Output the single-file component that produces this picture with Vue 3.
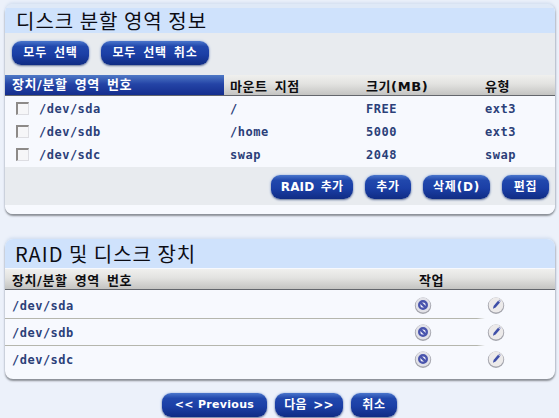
<template>
  <div class="page">
    <section class="card first">
      <h2 class="title">디스크 분할 영역 정보</h2>
      <div class="toolbar">
        <button class="btn w77">모두 선택</button>
        <button class="btn w108">모두 선택 취소</button>
      </div>
      <div class="row head parts">
        <span class="sel-col">장치/분할 영역 번호</span>
        <span>마운트 지점</span>
        <span>크기(MB)</span>
        <span>유형</span>
      </div>
      <div class="rows">
        <div v-for="p in partitions" :key="p.dev" class="row parts part-row">
          <span class="dev"><i class="check"></i>{{ p.dev }}</span>
          <span>{{ p.mount }}</span>
          <span>{{ p.size }}</span>
          <span>{{ p.type }}</span>
        </div>
      </div>
      <div class="actions">
        <button class="btn w82 tight">RAID 추가</button>
        <button class="btn w46">추가</button>
        <button class="btn w67">삭제(D)</button>
        <button class="btn w47">편집</button>
      </div>
    </section>

    <section class="card second">
      <h2 class="title">RAID 및 디스크 장치</h2>
      <div class="row head raid">
        <span>장치/분할 영역 번호</span>
        <span class="work">작업</span>
      </div>
      <div class="raid-rows">
        <div v-for="d in devices" :key="d" class="row raid raid-row">
          <span>{{ d }}</span>
          <span class="tool">
            <svg viewBox="0 0 18 18" width="18" height="18">
              <circle cx="9" cy="9.7" r="8.2" fill="#a4a5ad" />
              <circle cx="9" cy="9" r="7.4" fill="#e2e2e8" />
              <circle cx="9" cy="9" r="3.8" fill="#f4f4fa" stroke="#4a55ad" stroke-width="2.4" />
              <path d="M6.3 6.3 11.7 11.7" stroke="#4a55ad" stroke-width="2.4" />
            </svg>
          </span>
          <span class="tool">
            <svg viewBox="0 0 18 18" width="18" height="18">
              <circle cx="9" cy="9.7" r="8.2" fill="#a4a5ad" />
              <circle cx="9" cy="9" r="7.4" fill="#eceaea" />
              <path d="M6 12.8 6.6 10 11 4.8 13 6.5 8.6 11.6Z" fill="#3f4fa8" />
              <path d="M11.4 4.4 12.2 3.6 13.8 5 13.2 5.9Z" fill="#8f97c8" />
            </svg>
          </span>
        </div>
      </div>
    </section>

    <div class="nav">
      <button class="btn w105 small">&lt;&lt; Previous</button>
      <button class="btn w68 tight">다음 &gt;&gt;</button>
      <button class="btn w46">취소</button>
    </div>
  </div>
</template>

<script setup>
const partitions = [
  { dev: '/dev/sda', mount: '/', size: 'FREE', type: 'ext3' },
  { dev: '/dev/sdb', mount: '/home', size: '5000', type: 'ext3' },
  { dev: '/dev/sdc', mount: 'swap', size: '2048', type: 'swap' },
]

const devices = ['/dev/sda', '/dev/sdb', '/dev/sdc']
</script>

<style>
html,
body {
  margin: 0;
  overflow: hidden;
}
</style>

<style scoped>
.page {
  box-sizing: border-box;
  width: 559px;
  height: 418px;
  padding: 4px 4px 0 5px;
  overflow: hidden;
  background: #ecf1fa;
  font-family: "DejaVu Sans", "Noto Sans CJK KR", sans-serif;
}

.card {
  box-sizing: border-box;
  background: #f7f9fe;
  border-radius: 8px;
  box-shadow: 0 2px 2px #8b8f96, 0 -2px 3px #d8e3f3, 1px 0 2px #c5ccd8;
  overflow: hidden;
}

.first {
  height: 210px;
  padding-top: 4px;
  background: linear-gradient(#dfe9f7 0 4px, #f7f9fe 4px);
}

.second {
  height: 140px;
  margin-top: 25px;
}

.title {
  margin: 0;
  height: 25px;
  padding-left: 11px;
  background: #cfe2fc;
  color: #0c0c14;
  font-family: "Noto Sans CJK KR", sans-serif;
  font-size: 20px;
  font-weight: 400;
  line-height: 25px;
  letter-spacing: 1px;
}

.second .title {
  height: 29px;
  padding-left: 10px;
  line-height: 29px;
}

.toolbar {
  display: flex;
  gap: 12px;
  height: 42px;
  box-sizing: border-box;
  padding: 8px 7px 0;
  background: #e8ebef;
}

.btn {
  box-sizing: border-box;
  height: 24px;
  padding: 0;
  border: 0;
  border-radius: 9px;
  background: linear-gradient(#4a76cc 0, #2148ad 22%, #1b3fa6 55%, #102c84 100%);
  box-shadow: 0 1px 2px #6f7a98, 0 0 3px #a9c0ea;
  color: #fff;
  font-family: "DejaVu Sans", "Noto Sans CJK KR", sans-serif;
  font-size: 12px;
  font-weight: 700;
  line-height: 22px;
  letter-spacing: 0.8px;
  word-spacing: 2px;
  white-space: nowrap;
}

.btn.tight {
  letter-spacing: 0.2px;
}

.btn.small {
  font-size: 11px;
  letter-spacing: 0.3px;
  word-spacing: 0;
}

.w46 { width: 46px; }
.w47 { width: 47px; }
.w67 { width: 67px; }
.w68 { width: 68px; }
.w77 { width: 77px; }
.w82 { width: 82px; }
.w105 { width: 105px; }
.w108 { width: 108px; }

.row {
  display: grid;
  align-items: center;
  color: #2b4079;
  font-family: "DejaVu Sans Mono", monospace;
  font-size: 12px;
  font-weight: 700;
  letter-spacing: 0.5px;
}

.parts {
  grid-template-columns: 219px 136px 119px 1fr;
}

.parts > span {
  padding-left: 6px;
}

.head {
  height: 21px;
  background: linear-gradient(#f0f0ee, #e2e2e0 45%, #c4c4c2);
  border-bottom: 1px solid #63666c;
  box-sizing: border-box;
  color: #0d0d10;
  font-family: "DejaVu Sans", "Noto Sans CJK KR", sans-serif;
  font-size: 13px;
  letter-spacing: 0.6px;
  word-spacing: 2px;
}

.head .sel-col {
  align-self: stretch;
  padding-left: 7px;
  background: linear-gradient(#4f79c6, #2444a6 45%, #152e8e);
  color: #fff;
  line-height: 20px;
}

.rows {
  padding-top: 1px;
  height: 71px;
  box-sizing: border-box;
}

.part-row {
  height: 23px;
}

.part-row > .dev {
  display: flex;
  align-items: center;
  padding-left: 11px;
}

.check {
  box-sizing: border-box;
  width: 13px;
  height: 13px;
  margin-right: 10px;
  border: 2px solid #8d8a88;
  border-right: 1px solid #dddde2;
  border-bottom: 1px solid #dddde2;
  background: #f6f6f8;
}

.actions {
  display: flex;
  justify-content: flex-end;
  gap: 12px;
  height: 38px;
  box-sizing: border-box;
  padding: 8px 6px 0 0;
  background: #e8ebef;
}

.raid {
  grid-template-columns: 390px 73px 1fr;
}

.second .head {
  margin-top: 1px;
  height: 21px;
  padding-left: 7px;
}

.work {
  justify-self: start;
  margin-left: 17px;
}

.raid-rows {
  padding: 2px 0 6px;
}

.raid-row {
  height: 27px;
  padding-left: 7px;
  background: linear-gradient(90deg, #b5b6ad 0, #b5b6ad 472px, rgba(181, 182, 173, 0) 480px) bottom / 100% 1px no-repeat;
}

.raid-row:last-child {
  background: none;
}

.tool {
  display: flex;
  justify-content: center;
  width: 18px;
  margin: 0 0 2px 12px;
}

.nav {
  display: flex;
  justify-content: flex-start;
  gap: 8px;
  padding: 14px 0 0 157px;
}
</style>
